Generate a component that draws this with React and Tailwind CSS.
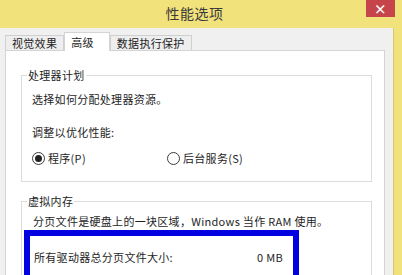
import React from "react";

const Radio = ({ checked, label, className = "" }) => {
  return (
    <div className={`flex items-center gap-[3px] ${className}`}>
      <span className="w-[13px] h-[13px] rounded-full border border-[#3c3c3c] bg-white flex items-center justify-center">
        {checked && <span className="w-[7px] h-[7px] rounded-full bg-[#222]"></span>}
      </span>
      <span>{label}</span>
    </div>
  );
};

const Tab = ({ label, active }) => {
  if (active) {
    return (
      <div className="h-[19px] -mb-px relative z-10 bg-white border border-b-0 border-[#d4d4d4] pl-[6px] pr-[15px] pt-[1px] leading-[16px]">
        {label}
      </div>
    );
  }
  return (
    <div className="h-[15px] bg-[#eeeeee] border border-b-0 border-[#cfcfcf] px-[6px] leading-[14px]">
      {label}
    </div>
  );
};

const App = () => {
  return (
    <div className="w-[402px] h-[275px] overflow-hidden bg-[#f0f0f0] flex flex-col text-[11px] tracking-[0.3px] text-[#1e1e1e] font-['Noto_Sans_CJK_SC','Microsoft_YaHei',sans-serif]">
      {/* Title bar */}
      <div className="relative h-[28px] shrink-0 bg-[#f2e27c] flex items-center justify-center pr-[13px] pb-[2px]">
        <span className="text-[14px] tracking-[0.5px] text-[#3a3a3a] leading-[18px]">性能选项</span>
        <div className="absolute top-0 right-[7px] w-[29px] h-[17px] bg-[#c6454a] flex items-center justify-center text-white text-[13px] font-bold leading-none">
          ×
        </div>
      </div>

      <div className="flex flex-1">
        <div className="flex-1 pl-[5px] pr-[8px] flex flex-col">
          {/* Tabs */}
          <div className="flex items-end mt-[4px] h-[18px]">
            <Tab label="视觉效果" />
            <Tab label="高级" active />
            <Tab label="数据执行保护" />
          </div>

          {/* Panel */}
          <div className="flex-1 bg-white border border-[#d4d4d4] pl-[15px] pr-[12px]">
            <fieldset className="mt-[17px] border border-[#dcdcdc] pl-[10px] pb-[15px]">
              <legend className="ml-[-5px] px-[1px] leading-[14px]">处理器计划</legend>
              <div className="pt-[9px] leading-[16px]">选择如何分配处理器资源。</div>
              <div className="mt-[17px] leading-[16px]">调整以优化性能:</div>
              <div className="mt-[10px] flex leading-[16px]">
                <Radio checked label="程序(P)" className="w-[135px]" />
                <Radio label="后台服务(S)" />
              </div>
            </fieldset>

            <fieldset className="mt-[12px] border border-[#dcdcdc] pl-[1px] pb-[10px]">
              <legend className="ml-[4px] px-[1px] leading-[14px]">虚拟内存</legend>
              <div className="pt-[5px] pl-[10px] leading-[16px]">
                分页文件是硬盘上的一块区域，Windows 当作 RAM 使用。
              </div>
              <div className="mt-[1px] ml-[1px] w-[275px] h-[70px] border-[6px] border-[#0000e0] pt-[13px] pl-[4px] pr-[10px]">
                <div className="flex justify-between leading-[16px]">
                  <span>所有驱动器总分页文件大小:</span>
                  <span>0 MB</span>
                </div>
              </div>
            </fieldset>
          </div>
        </div>

        {/* Right window border */}
        <div className="w-[9px] shrink-0 border-l border-[#d9c86a] bg-[#f2e27c]"></div>
      </div>
    </div>
  );
};

export default App;
